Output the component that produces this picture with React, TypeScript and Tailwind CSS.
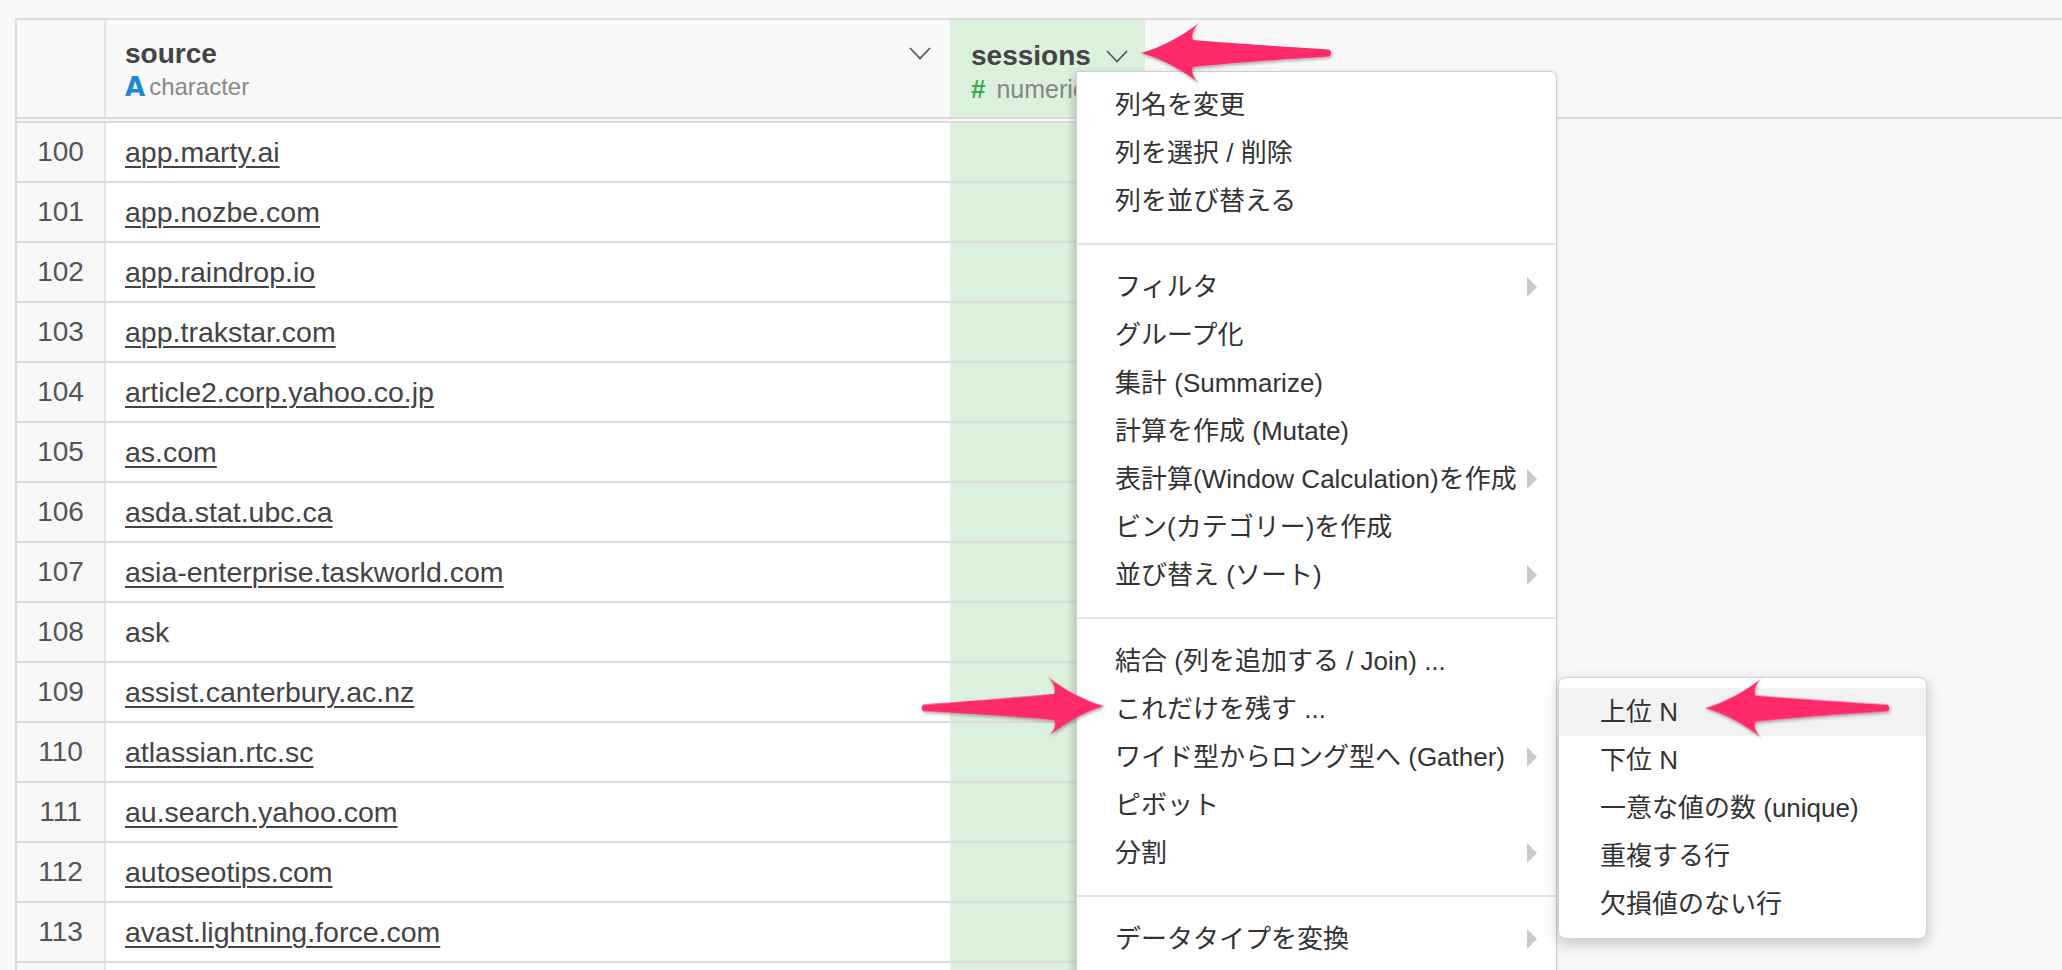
import React from "react";

const rows: { n: number; source: string; link: boolean }[] = [
  { n: 100, source: "app.marty.ai", link: true },
  { n: 101, source: "app.nozbe.com", link: true },
  { n: 102, source: "app.raindrop.io", link: true },
  { n: 103, source: "app.trakstar.com", link: true },
  { n: 104, source: "article2.corp.yahoo.co.jp", link: true },
  { n: 105, source: "as.com", link: true },
  { n: 106, source: "asda.stat.ubc.ca", link: true },
  { n: 107, source: "asia-enterprise.taskworld.com", link: true },
  { n: 108, source: "ask", link: false },
  { n: 109, source: "assist.canterbury.ac.nz", link: true },
  { n: 110, source: "atlassian.rtc.sc", link: true },
  { n: 111, source: "au.search.yahoo.com", link: true },
  { n: 112, source: "autoseotips.com", link: true },
  { n: 113, source: "avast.lightning.force.com", link: true },
];

const menuSections: { label: string; sub?: boolean }[][] = [
  [{ label: "列名を変更" }, { label: "列を選択 / 削除" }, { label: "列を並び替える" }],
  [
    { label: "フィルタ", sub: true },
    { label: "グループ化" },
    { label: "集計 (Summarize)" },
    { label: "計算を作成 (Mutate)" },
    { label: "表計算(Window Calculation)を作成", sub: true },
    { label: "ビン(カテゴリー)を作成" },
    { label: "並び替え (ソート)", sub: true },
  ],
  [
    { label: "結合 (列を追加する / Join) ..." },
    { label: "これだけを残す ..." },
    { label: "ワイド型からロング型へ (Gather)", sub: true },
    { label: "ピボット" },
    { label: "分割", sub: true },
  ],
  [{ label: "データタイプを変換", sub: true }],
];

const subItems = ["上位 N", "下位 N", "一意な値の数 (unique)", "重複する行", "欠損値のない行"];

const ARROW =
  "M0,0 C22,-6 42,-18 58,-30 C52,-24 50,-18 52,-13 C100,-9 150,-6 187,-3.5 C191,-3.3 191,3.3 187,3.5 C150,6 100,9 52,14 C50,19 52,25 58,30 C42,18 22,6 0,0 Z";

function Chevron() {
  return (
    <svg width="22" height="13" viewBox="0 0 22 13" fill="none">
      <path d="M1 1 L11 11.5 L21 1" stroke="#555" strokeWidth="1.8" />
    </svg>
  );
}

function SubTriangle() {
  return (
    <svg width="10" height="20" viewBox="0 0 10 20">
      <path d="M0 0 L10 10 L0 20 Z" fill="#c9c9c9" />
    </svg>
  );
}

export default function App() {
  return (
    <div
      className="relative h-[970px] w-[2062px] overflow-hidden bg-[#f8f8f8] text-[#3a3a3a]"
      style={{ fontFamily: '"Liberation Sans", "Noto Sans CJK JP", sans-serif' }}
    >
      <div className="pt-[18px] pl-[15px]">
        <div className="border-t-2 border-l-2 border-[#dedede]">
          {/* header */}
          <div className="flex h-[99px] border-b-2 border-[#dcdcdc]">
            <div className="w-[89px] border-r-2 border-[#e4e4e4] bg-[#f8f8f8]" />
            <div className="flex w-[844px] items-center justify-between bg-[#f9f9f9] pl-[19px] pr-[19px]">
              <div className="flex flex-col">
                <span className="text-[28px] leading-[34px] font-bold text-[#444]">source</span>
                <span className="mt-[2px] flex items-center text-[24px] leading-[28px] text-[#888]">
                  <span
                    className="mr-[4px] text-[26px] font-bold text-[#1b8ad6]"
                    style={{ fontFamily: '"DejaVu Sans", sans-serif' }}
                  >
                    A
                  </span>
                  character
                </span>
              </div>
              <div className="-mt-[30px]">
                <Chevron />
              </div>
            </div>
            <div className="flex w-[195px] flex-col bg-[#dbf1db] pl-[21px]">
              <div className="mt-[19px] flex items-center gap-[15px]">
                <span className="text-[28px] leading-[34px] font-bold text-[#444]">sessions</span>
                <Chevron />
              </div>
              <span className="mt-[2px] flex items-center text-[25px] leading-[28px] whitespace-nowrap text-[#888]">
                <span className="mr-[11px] text-[26px] font-bold text-[#3aab4a]">#</span>
                numeric
              </span>
            </div>
            <div className="flex-1 bg-[#f8f8f8]" />
          </div>
          {/* body */}
          <div className="mt-[2px] w-[1128px] border-t-2 border-[#dcdcdc]">
            {rows.map((r) => (
              <div key={r.n} className="flex h-[60px] border-b-2 border-[#dcdcdc]">
                <div className="flex w-[89px] items-center justify-center border-r-2 border-[#e4e4e4] bg-[#f8f8f8] text-[28px] text-[#555]">
                  {r.n}
                </div>
                <div className="flex w-[844px] items-center bg-white pl-[19px] text-[28.5px] text-[#444]">
                  {r.link ? (
                    <span className="underline decoration-[2px] underline-offset-[4px]">{r.source}</span>
                  ) : (
                    r.source
                  )}
                </div>
                <div className="w-[195px] bg-[#dbf1db]" />
              </div>
            ))}
            <div className="flex h-[60px]">
              <div className="w-[89px] border-r-2 border-[#e4e4e4] bg-[#f8f8f8]" />
              <div className="w-[844px] bg-white" />
              <div className="w-[195px] bg-[#dbf1db]" />
            </div>
          </div>
        </div>
      </div>

      {/* column menu */}
      <div className="absolute top-[71px] left-[1076px] w-[481px] rounded-tr-[6px] border border-[#cfcfcf] bg-white pb-[60px] text-[26px] text-[#333] shadow-[-3px_3px_8px_rgba(0,0,0,0.18)]">
        {menuSections.map((section, i) => (
          <div key={i}>
            {i > 0 && <div className="h-[2px] bg-[#e6e6e6]" />}
            <div className={i === 0 ? "pt-[9px] pb-[18px]" : "py-[18px]"}>
              {section.map((item) => (
                <div key={item.label} className="flex h-[48px] items-center justify-between pr-[19px] pl-[38px]">
                  <span className="whitespace-nowrap">{item.label}</span>
                  {item.sub && <SubTriangle />}
                </div>
              ))}
            </div>
          </div>
        ))}
      </div>

      {/* submenu */}
      <div className="absolute top-[677px] left-[1558px] w-[369px] rounded-[8px] border border-[#d4d4d4] bg-white py-[10px] text-[26px] text-[#333] shadow-[0_5px_14px_rgba(0,0,0,0.22)]">
        {subItems.map((s, i) => (
          <div
            key={s}
            className={`flex h-[48px] items-center pl-[41px] whitespace-nowrap ${i === 0 ? "bg-[#f2f2f2]" : ""}`}
          >
            {s}
          </div>
        ))}
      </div>

      {/* annotation arrows */}
      <svg className="pointer-events-none absolute inset-0" width="2062" height="970">
        <defs>
          <filter id="sh" x="-20%" y="-50%" width="140%" height="200%">
            <feDropShadow dx="1" dy="2" stdDeviation="1.5" floodColor="#000" floodOpacity="0.3" />
          </filter>
        </defs>
        <g fill="#ff2b6b" filter="url(#sh)">
          <path d={ARROW} transform="translate(1141,53)" />
          <path d={ARROW} transform="translate(1104,706) rotate(-0.6) scale(-0.96,0.98)" />
          <path d={ARROW} transform="translate(1705,708) scale(0.97,0.98)" />
        </g>
      </svg>
    </div>
  );
}
